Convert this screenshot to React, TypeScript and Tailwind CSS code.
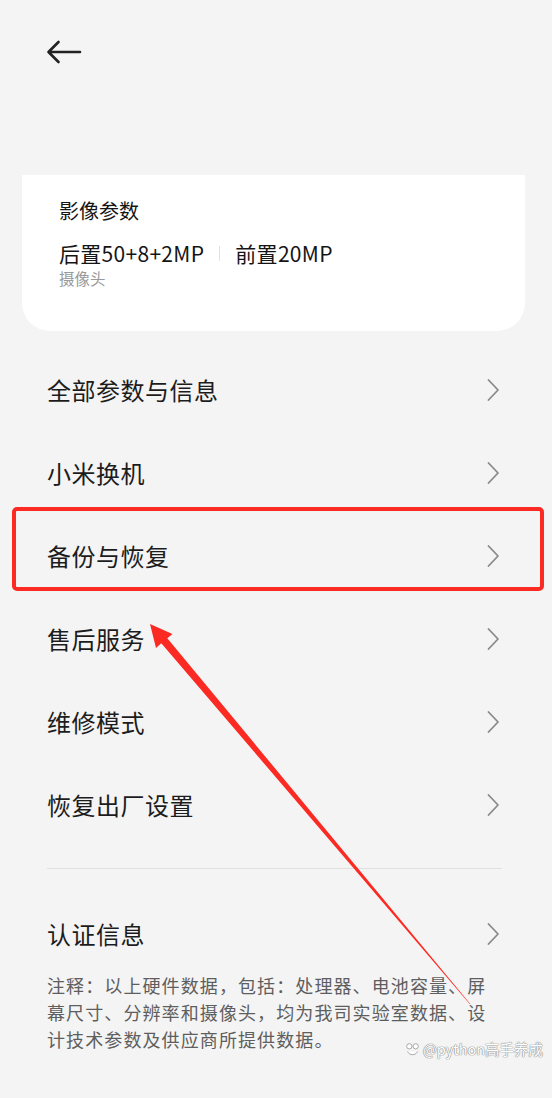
import React from 'react';

const menuTop = ['全部参数与信息', '小米换机', '备份与恢复', '售后服务', '维修模式', '恢复出厂设置'];

function Chevron() {
  return (
    <svg width="14" height="24" viewBox="0 0 14 24" fill="none" className="shrink-0">
      <path d="M2.5 2 L12 12 L2.5 22" stroke="#8a8a8a" strokeWidth="1.8" strokeLinecap="round" strokeLinejoin="round" />
    </svg>
  );
}

function MenuRow({ label, className = '' }: { label: string; className?: string }) {
  return (
    <div className={`flex h-[83px] items-center justify-between pl-[47px] pr-[52px] ${className}`}>
      <span className="text-[24px] tracking-[0.5px] text-[#1c1c1c]">{label}</span>
      <Chevron />
    </div>
  );
}

export default function App() {
  return (
    <div
      className="relative h-[1098px] w-[552px] overflow-hidden bg-[#f4f4f4]"
      style={{ fontFamily: '"Noto Sans CJK SC", "Noto Sans", sans-serif' }}
    >
      {/* header */}
      <div className="flex h-[175px] items-start pl-[46px] pt-[40px]">
        <svg width="36" height="24" viewBox="0 0 36 24" fill="none">
          <path d="M34 12 H3 M12.5 2 L2.5 12 L12.5 22" stroke="#222" strokeWidth="2.6" strokeLinecap="round" strokeLinejoin="round" />
        </svg>
      </div>

      {/* camera card */}
      <div className="ml-[22px] h-[156px] w-[503px] rounded-b-[28px] bg-white pl-[37px] pt-[22px]">
        <div className="text-[20px] leading-[28px] text-[#151515]">影像参数</div>
        <div className="mt-[14px] flex items-center text-[21px] leading-[28px] tracking-[0.3px] text-[#151515]">
          <span>后置50+8+2MP</span>
          <span className="mx-[15px] h-[15px] w-px bg-[#e2e2e2]" />
          <span>前置20MP</span>
        </div>
        <div className="text-[15.5px] leading-[22px] text-[#9a9a9a]">摄像头</div>
      </div>

      {/* menu */}
      <div className="mt-[17px]">
        {menuTop.map((m) => (
          <MenuRow key={m} label={m} />
        ))}
      </div>

      <div className="mx-[47px] mt-[22px] h-px w-[455px] bg-[#e0e0e0]" />

      <MenuRow label="认证信息" className="mt-[23px] h-[80px]" />

      <div className="-mt-[3px] pl-[47px] text-[18px] leading-[27px] tracking-[1.1px] text-[#5e5e5e]">
        <div>注释：以上硬件数据，包括：处理器、电池容量、屏</div>
        <div>幕尺寸、分辨率和摄像头，均为我司实验室数据、设</div>
        <div>计技术参数及供应商所提供数据。</div>
      </div>

      {/* annotation: red box */}
      <div className="absolute left-[12px] top-[507px] h-[84px] w-[532px] rounded-[5px] border-[4px] border-[#fb2a23]" />

      {/* annotation: red arrow */}
      <svg className="absolute left-0 top-0" width="552" height="1098" viewBox="0 0 552 1098">
        <polygon
          points="150,624 172.5,634 167.3,638.3 470.3,1004 469.7,1004 161.3,643.3 156,648"
          fill="#fb2a23"
        />
      </svg>

      {/* watermark */}
      <div
        className="absolute left-[404px] top-[1039px] flex items-center text-[14.5px] leading-[20px] text-white"
        style={{ textShadow: '0 0 1px #8a8a8a, 0 0 1px #8a8a8a, 0 0 1px #8a8a8a' }}
      >
        <svg width="17" height="17" viewBox="0 0 16 16" className="mr-[2px]">
          <circle cx="5" cy="5" r="2.5" fill="#fff" stroke="#999" strokeWidth="0.8" />
          <circle cx="11" cy="5" r="2.5" fill="#fff" stroke="#999" strokeWidth="0.8" />
          <path d="M3 10 Q8 16 13 10" fill="#fff" stroke="#999" strokeWidth="0.8" />
        </svg>
        <span>@python高手养成</span>
      </div>
    </div>
  );
}
